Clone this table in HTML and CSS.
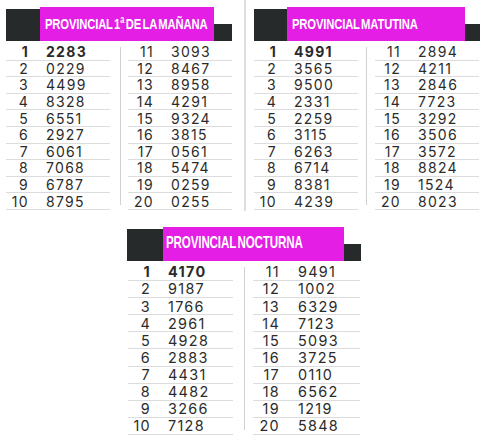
FILE: index.html
```html
<!DOCTYPE html>
<html lang="es">
<head>
<meta charset="utf-8">
<title>Quiniela Provincial</title>
<link rel="stylesheet" href="styles.css">
</head>
<body>
<div class="page">
  <div class="top">
    <section class="draw draw--a">
      <div class="head"><div class="head-dark"></div><div class="head-title"><span class="head-text">PROVINCIAL 1ª DE LA MAÑANA</span></div><div class="head-tab"></div></div>
      <div class="body">
        <div class="col col--l">
          <div class="row row--first"><span class="num">1</span><span class="val">2283</span></div>
          <div class="row"><span class="num">2</span><span class="val">0229</span></div>
          <div class="row"><span class="num">3</span><span class="val">4499</span></div>
          <div class="row"><span class="num">4</span><span class="val">8328</span></div>
          <div class="row"><span class="num">5</span><span class="val">6551</span></div>
          <div class="row"><span class="num">6</span><span class="val">2927</span></div>
          <div class="row"><span class="num">7</span><span class="val">6061</span></div>
          <div class="row"><span class="num">8</span><span class="val">7068</span></div>
          <div class="row"><span class="num">9</span><span class="val">6787</span></div>
          <div class="row"><span class="num">10</span><span class="val">8795</span></div>
        </div>
        <div class="col-sep"></div>
        <div class="col col--r">
          <div class="row"><span class="num">11</span><span class="val">3093</span></div>
          <div class="row"><span class="num">12</span><span class="val">8467</span></div>
          <div class="row"><span class="num">13</span><span class="val">8958</span></div>
          <div class="row"><span class="num">14</span><span class="val">4291</span></div>
          <div class="row"><span class="num">15</span><span class="val">9324</span></div>
          <div class="row"><span class="num">16</span><span class="val">3815</span></div>
          <div class="row"><span class="num">17</span><span class="val">0561</span></div>
          <div class="row"><span class="num">18</span><span class="val">5474</span></div>
          <div class="row"><span class="num">19</span><span class="val">0259</span></div>
          <div class="row"><span class="num">20</span><span class="val">0255</span></div>
        </div>
      </div>
    </section>
    <div class="vsep"></div>
    <section class="draw draw--b">
      <div class="head"><div class="head-dark"></div><div class="head-title"><span class="head-text">PROVINCIAL MATUTINA</span></div><div class="head-tab"></div></div>
      <div class="body">
        <div class="col col--l">
          <div class="row row--first"><span class="num">1</span><span class="val">4991</span></div>
          <div class="row"><span class="num">2</span><span class="val">3565</span></div>
          <div class="row"><span class="num">3</span><span class="val">9500</span></div>
          <div class="row"><span class="num">4</span><span class="val">2331</span></div>
          <div class="row"><span class="num">5</span><span class="val">2259</span></div>
          <div class="row"><span class="num">6</span><span class="val">3115</span></div>
          <div class="row"><span class="num">7</span><span class="val">6263</span></div>
          <div class="row"><span class="num">8</span><span class="val">6714</span></div>
          <div class="row"><span class="num">9</span><span class="val">8381</span></div>
          <div class="row"><span class="num">10</span><span class="val">4239</span></div>
        </div>
        <div class="col-sep"></div>
        <div class="col col--r">
          <div class="row"><span class="num">11</span><span class="val">2894</span></div>
          <div class="row"><span class="num">12</span><span class="val">4211</span></div>
          <div class="row"><span class="num">13</span><span class="val">2846</span></div>
          <div class="row"><span class="num">14</span><span class="val">7723</span></div>
          <div class="row"><span class="num">15</span><span class="val">3292</span></div>
          <div class="row"><span class="num">16</span><span class="val">3506</span></div>
          <div class="row"><span class="num">17</span><span class="val">3572</span></div>
          <div class="row"><span class="num">18</span><span class="val">8824</span></div>
          <div class="row"><span class="num">19</span><span class="val">1524</span></div>
          <div class="row"><span class="num">20</span><span class="val">8023</span></div>
        </div>
      </div>
    </section>
  </div>
  <section class="draw draw--c">
    <div class="head"><div class="head-dark"></div><div class="head-title"><span class="head-text">PROVINCIAL NOCTURNA</span></div><div class="head-tab"></div></div>
    <div class="body">
      <div class="col col--l">
        <div class="row row--first"><span class="num">1</span><span class="val">4170</span></div>
        <div class="row"><span class="num">2</span><span class="val">9187</span></div>
        <div class="row"><span class="num">3</span><span class="val">1766</span></div>
        <div class="row"><span class="num">4</span><span class="val">2961</span></div>
        <div class="row"><span class="num">5</span><span class="val">4928</span></div>
        <div class="row"><span class="num">6</span><span class="val">2883</span></div>
        <div class="row"><span class="num">7</span><span class="val">4431</span></div>
        <div class="row"><span class="num">8</span><span class="val">4482</span></div>
        <div class="row"><span class="num">9</span><span class="val">3266</span></div>
        <div class="row"><span class="num">10</span><span class="val">7128</span></div>
      </div>
      <div class="col-sep"></div>
      <div class="col col--r">
        <div class="row"><span class="num">11</span><span class="val">9491</span></div>
        <div class="row"><span class="num">12</span><span class="val">1002</span></div>
        <div class="row"><span class="num">13</span><span class="val">6329</span></div>
        <div class="row"><span class="num">14</span><span class="val">7123</span></div>
        <div class="row"><span class="num">15</span><span class="val">5093</span></div>
        <div class="row"><span class="num">16</span><span class="val">3725</span></div>
        <div class="row"><span class="num">17</span><span class="val">0110</span></div>
        <div class="row"><span class="num">18</span><span class="val">6562</span></div>
        <div class="row"><span class="num">19</span><span class="val">1219</span></div>
        <div class="row"><span class="num">20</span><span class="val">5848</span></div>
      </div>
    </div>
  </section>
</div>
</body>
</html>
```
FILE: styles.css
```css
* { box-sizing: border-box; }

body {
  margin: 0;
  background: #ffffff;
  color: #2b2b2b;
  font-family: Inter, "DejaVu Sans", sans-serif;
}

.page {
  width: 487px;
  height: 441px;
  overflow: hidden;
}

.top {
  display: flex;
  align-items: stretch;
  height: 211px;
}

.draw {
  --dark: 34px;
  --tab: 18px;
  --row: 16.6px;
  --fs: 14px;
  --c1: 104px;
  --c2: 104px;
  --m1: 10px;
  --m2: 7px;
  --off: 0px;
  --title: 15.2px;
  --tpad: 5px;
  --rnum: 26px;
  --rval: 17px;
  width: 226px;
  padding-top: 7px;
}

.draw--a { margin-left: 6px; }

.vsep {
  width: 2px;
  background: #dedede;
  margin-left: 12px;
  margin-right: 8px;
}

.draw--b {
  --dark: 33px;
  --tab: 15px;
  --m1: 8px;
  --m2: 8px;
}

.draw--c {
  --dark: 36px;
  --tab: 17px;
  --row: 17.1px;
  --fs: 14.4px;
  --c1: 105px;
  --c2: 107px;
  --m1: 11px;
  --m2: 8px;
  --off: 1px;
  --title: 15.7px;
  --tpad: 3px;
  --rnum: 27px;
  --rval: 18px;
  width: 234px;
  margin-left: 127px;
  margin-top: 16px;
  padding-top: 0;
}

.head {
  display: flex;
  align-items: flex-end;
  height: 34px;
}

.head-dark {
  width: var(--dark);
  height: 32px;
  background: #262a2b;
}

.head-title {
  flex: 1;
  min-width: 0;
  height: 34px;
  background: #e41ee4;
  color: #ffffff;
  display: flex;
  align-items: center;
  padding: 0 0 2px var(--tpad);
  overflow: hidden;
}

.head-text {
  display: inline-block;
  font-family: "Liberation Sans", Arial, sans-serif;
  font-weight: bold;
  font-size: var(--title);
  letter-spacing: -0.2px;
  word-spacing: -2px;
  white-space: nowrap;
  transform: scaleX(0.74);
  transform-origin: left center;
}

.head-tab {
  width: var(--tab);
  height: 17px;
  background: #262a2b;
}

.body {
  display: flex;
  margin-top: 3px;
  padding-left: var(--off);
}

.col--l { width: var(--c1); }
.col--r { width: var(--c2); }

.col-sep {
  width: 1px;
  background: #d2d2d2;
  margin: 3px var(--m2) 5px var(--m1);
}

.row {
  display: flex;
  align-items: center;
  height: var(--row);
  border-bottom: 1px solid #dcdcdc;
  font-size: var(--fs);
  line-height: 1;
  padding-top: 1px;
  letter-spacing: 1.3px;
}

.num {
  text-align: right;
  width: 23px;
}

.val { padding-left: 17px; }

.col--r .num { width: var(--rnum); }
.col--r .val { padding-left: var(--rval); }

.row--first { font-weight: bold; }
```
